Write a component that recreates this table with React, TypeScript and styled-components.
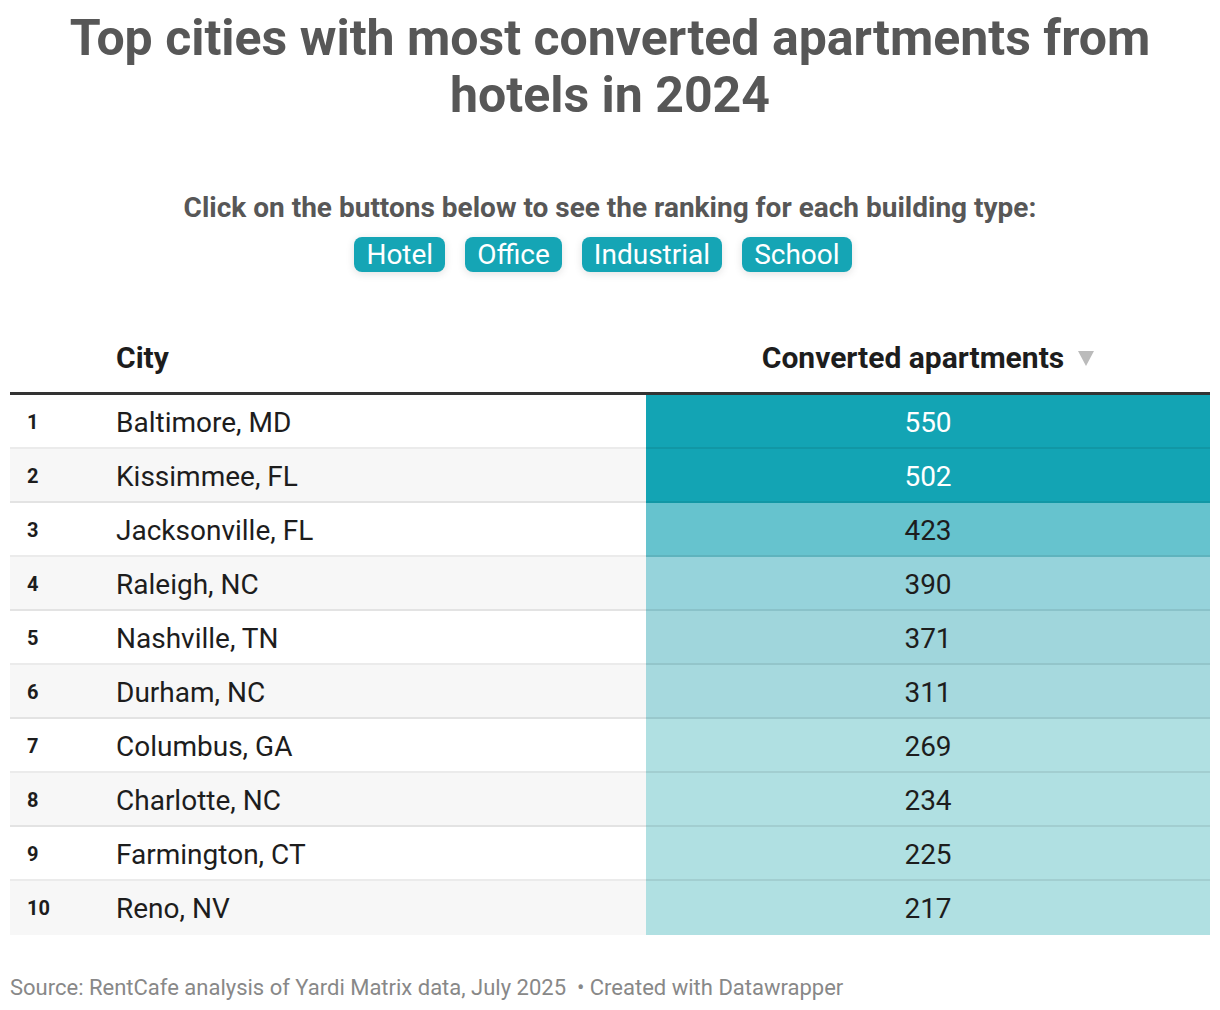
import React from "react";
import styled, { createGlobalStyle } from "styled-components";

const Global = createGlobalStyle`
  html, body { margin: 0; padding: 0; background: #fff; }
  body { font-family: Roboto, "Liberation Sans", sans-serif; }
`;

const Page = styled.div`
  width: 1220px;
  padding: 10px 10px 0;
  box-sizing: border-box;
`;

const Title = styled.h1`
  margin: 0;
  font-size: 50px;
  line-height: 57px;
  font-weight: 700;
  color: #575757;
  text-align: center;
`;

const Intro = styled.div`
  margin-top: 68px;
  display: flex;
  flex-direction: column;
  align-items: center;
  gap: 13px;
`;

const IntroText = styled.p`
  margin: 0;
  font-size: 28px;
  line-height: 32px;
  font-weight: 700;
  color: #575757;
`;

const ButtonRow = styled.div`
  display: flex;
  gap: 20px;
  padding-right: 14px;
`;

const TypeButton = styled.span`
  display: inline-block;
  background: #15a5b5;
  color: #fff;
  font-size: 28px;
  line-height: 35px;
  padding: 0 12px;
  border-radius: 8px;
  box-shadow: 0 2px 8px rgba(0, 0, 0, 0.12);
`;

const Table = styled.div`
  margin-top: 61px;
  display: flex;
  flex-direction: column;
`;

const HeadRow = styled.div`
  display: grid;
  grid-template-columns: 106px 530px 1fr;
  height: 62px;
  box-sizing: border-box;
  align-items: center;
  border-bottom: 3px solid #333;
  padding-bottom: 9px;
`;

const HeadCell = styled.div<{ $center?: boolean }>`
  display: flex;
  align-items: center;
  justify-content: ${(p) => (p.$center ? "center" : "flex-start")};
  font-size: 30px;
  line-height: 36px;
  font-weight: 700;
  color: #1d1d1d;
`;

const SortArrow = styled.span`
  width: 0;
  height: 0;
  margin-left: 14px;
  border-left: 8px solid transparent;
  border-right: 8px solid transparent;
  border-top: 15px solid #bbb;
`;

const Row = styled.div<{ $alt: boolean }>`
  display: grid;
  grid-template-columns: 106px 530px 1fr;
  height: 54px;
  background: ${(p) => (p.$alt ? "#f7f7f7" : "#fff")};
  position: relative;
  &:not(:last-child)::after {
    content: "";
    position: absolute;
    left: 0;
    right: 0;
    bottom: 0;
    height: 2px;
    background: rgba(0, 0, 0, 0.08);
  }
`;

const Rank = styled.div`
  display: flex;
  align-items: center;
  padding-left: 17px;
  font-size: 20px;
  font-weight: 700;
  color: #1d1d1d;
`;

const City = styled.div`
  display: flex;
  align-items: center;
  font-size: 28px;
  color: #1d1d1d;
`;

const Value = styled.div<{ $bg: string; $light: boolean }>`
  display: flex;
  align-items: center;
  justify-content: center;
  background: ${(p) => p.$bg};
  color: ${(p) => (p.$light ? "#fff" : "#1d1d1d")};
  font-size: 28px;
`;

const Footer = styled.div`
  margin-top: 40px;
  font-size: 22px;
  line-height: 26px;
  color: #888;
`;

const rows: [string, number, string, boolean][] = [
  ["Baltimore, MD", 550, "#13a4b4", true],
  ["Kissimmee, FL", 502, "#13a4b4", true],
  ["Jacksonville, FL", 423, "#66c3ce", false],
  ["Raleigh, NC", 390, "#96d3db", false],
  ["Nashville, TN", 371, "#a0d6dc", false],
  ["Durham, NC", 311, "#a6d9de", false],
  ["Columbus, GA", 269, "#b0e0e2", false],
  ["Charlotte, NC", 234, "#b0e0e2", false],
  ["Farmington, CT", 225, "#b0e0e2", false],
  ["Reno, NV", 217, "#b0e0e2", false],
];

export default function App() {
  return (
    <Page>
      <Global />
      <Title>
        Top cities with most converted apartments from
        <br />
        hotels in 2024
      </Title>
      <Intro>
        <IntroText>Click on the buttons below to see the ranking for each building type:</IntroText>
        <ButtonRow>
          {["Hotel", "Office", "Industrial", "School"].map((b) => (
            <TypeButton key={b}>{b}</TypeButton>
          ))}
        </ButtonRow>
      </Intro>
      <Table>
        <HeadRow>
          <div />
          <HeadCell>City</HeadCell>
          <HeadCell $center>
            Converted apartments
            <SortArrow />
          </HeadCell>
        </HeadRow>
        {rows.map(([city, v, bg, light], i) => (
          <Row key={city} $alt={i % 2 === 1}>
            <Rank>{i + 1}</Rank>
            <City>{city}</City>
            <Value $bg={bg} $light={light}>
              {v}
            </Value>
          </Row>
        ))}
      </Table>
      <Footer>Source: RentCafe analysis of Yardi Matrix data, July 2025 &nbsp;• Created with Datawrapper</Footer>
    </Page>
  );
}
